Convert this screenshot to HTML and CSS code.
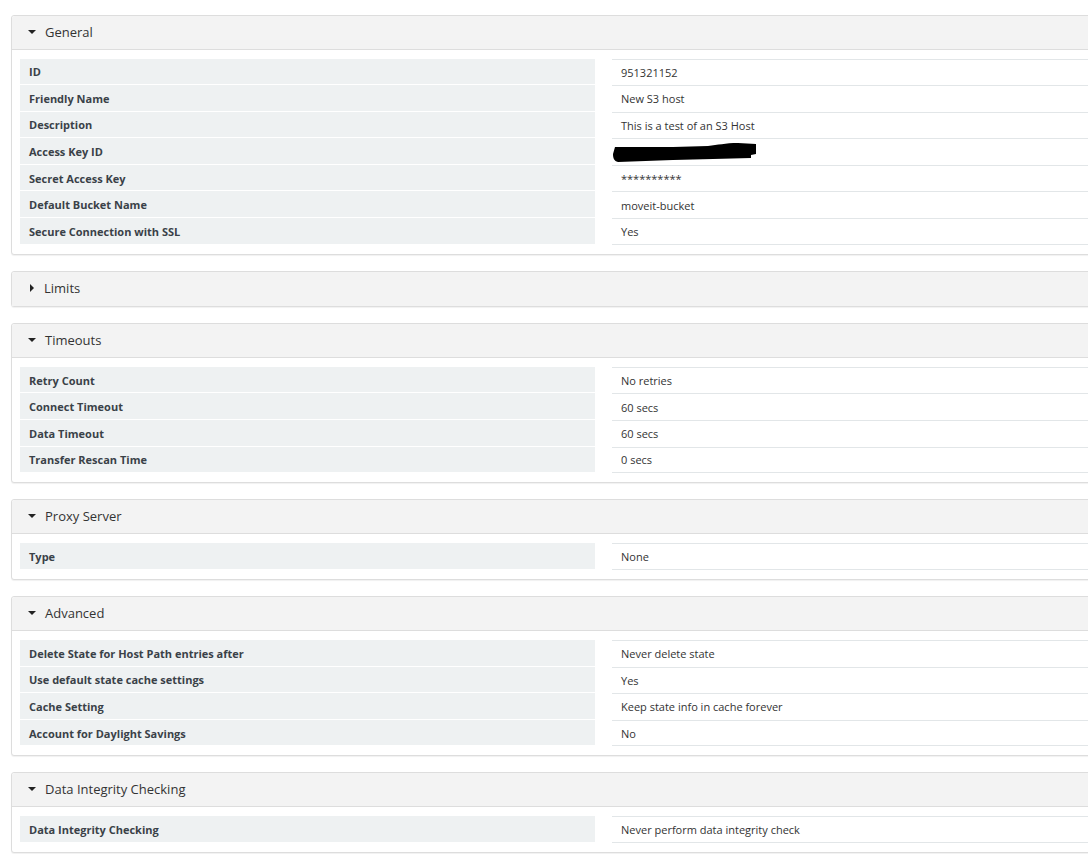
FILE: index.html
```html
<!DOCTYPE html>
<html lang="en">
  <head>
    <meta charset="UTF-8" />
    <title>Host Details</title>
    <link rel="stylesheet" href="styles.css">
  </head>
  <body>
    <div class="page">
      <div class="panel">
        <div class="panel-head"><span class="caret"></span>General</div>
        <div class="panel-body">
          <div class="row"><div class="label">ID</div><div class="value">951321152</div></div>
          <div class="row"><div class="label">Friendly Name</div><div class="value">New S3 host</div></div>
          <div class="row"><div class="label">Description</div><div class="value">This is a test of an S3 Host</div></div>
          <div class="row">
            <div class="label">Access Key ID</div>
            <div class="value">
              <svg class="redact" width="144" height="20" viewBox="0 0 144 20">
                <path d="M2 4 L60 4 L95 3 C105 2 112 0 125 0 L143 1 L143 11 L138 12 L138 15 L100 16 L60 17 L5 19 C1 18 0 15 0 11 Z" fill="#000"/>
              </svg>
            </div>
          </div>
          <div class="row"><div class="label">Secret Access Key</div><div class="value">**********</div></div>
          <div class="row"><div class="label">Default Bucket Name</div><div class="value">moveit-bucket</div></div>
          <div class="row"><div class="label">Secure Connection with SSL</div><div class="value">Yes</div></div>
        </div>
      </div>

      <div class="panel">
        <div class="panel-head closed"><span class="caret right"></span>Limits</div>
      </div>

      <div class="panel">
        <div class="panel-head"><span class="caret"></span>Timeouts</div>
        <div class="panel-body">
          <div class="row"><div class="label">Retry Count</div><div class="value">No retries</div></div>
          <div class="row"><div class="label">Connect Timeout</div><div class="value">60 secs</div></div>
          <div class="row"><div class="label">Data Timeout</div><div class="value">60 secs</div></div>
          <div class="row"><div class="label">Transfer Rescan Time</div><div class="value">0 secs</div></div>
        </div>
      </div>

      <div class="panel">
        <div class="panel-head"><span class="caret"></span>Proxy Server</div>
        <div class="panel-body">
          <div class="row"><div class="label">Type</div><div class="value">None</div></div>
        </div>
      </div>

      <div class="panel">
        <div class="panel-head"><span class="caret"></span>Advanced</div>
        <div class="panel-body">
          <div class="row"><div class="label">Delete State for Host Path entries after</div><div class="value">Never delete state</div></div>
          <div class="row"><div class="label">Use default state cache settings</div><div class="value">Yes</div></div>
          <div class="row"><div class="label">Cache Setting</div><div class="value">Keep state info in cache forever</div></div>
          <div class="row"><div class="label">Account for Daylight Savings</div><div class="value">No</div></div>
        </div>
      </div>

      <div class="panel">
        <div class="panel-head"><span class="caret"></span>Data Integrity Checking</div>
        <div class="panel-body">
          <div class="row"><div class="label">Data Integrity Checking</div><div class="value">Never perform data integrity check</div></div>
        </div>
      </div>
    </div>
  </body>
</html>
```

FILE: styles.css
```css
* {
  box-sizing: border-box;
  margin: 0;
  padding: 0;
}

body {
  background: #fff;
  font-family: "Open Sans", "Noto Sans", Arial, sans-serif;
  color: #333;
  overflow: hidden;
}

.page {
  padding: 14.5px 0 0 11px;
  width: 1130px;
}

.panel {
  border: 1px solid #dddddd;
  border-radius: 3px;
  box-shadow: 0 1px 1px rgba(0, 0, 0, 0.06);
  margin-bottom: 16.1px;
  background: #fff;
}

.panel-head {
  display: flex;
  align-items: center;
  height: 34px;
  padding-left: 16px;
  padding-bottom: 1px;
  background: #f3f3f3;
  border-bottom: 1px solid #dddddd;
  border-radius: 3px 3px 0 0;
  font-size: 13px;
  color: #333;
}

.panel-head.closed {
  border-bottom: none;
}

.caret {
  width: 0;
  height: 0;
  border-left: 4px solid transparent;
  border-right: 4px solid transparent;
  border-top: 4.5px solid #222;
  margin-right: 9px;
}

.caret.right {
  border-top: 4px solid transparent;
  border-bottom: 4px solid transparent;
  border-left: 4.5px solid #222;
  border-right: none;
  margin-left: 2px;
  margin-right: 10px;
}

.panel-body {
  padding: 9px 8px 9px;
}

.row {
  display: grid;
  grid-template-columns: 575px 1fr;
  column-gap: 17px;
}

.label {
  background: #eef1f2;
  border-bottom: 1px solid #fff;
  height: 26.6px;
  padding: 1px 0 0 9px;
  display: flex;
  align-items: center;
  font-size: 11px;
  font-weight: bold;
  color: #3a4148;
}

.row:last-child .label {
  border-bottom: none;
  height: 25.6px;
}

.value {
  border-top: 1px solid #e2e6e8;
  height: 26.6px;
  padding-left: 9px;
  display: flex;
  align-items: center;
  font-size: 11px;
  color: #333;
}

.row:last-child .value {
  border-bottom: 1px solid #e2e6e8;
}

.redact {
  display: block;
  flex-shrink: 0;
  margin-left: -8px;
  margin-top: 1px;
}
```
